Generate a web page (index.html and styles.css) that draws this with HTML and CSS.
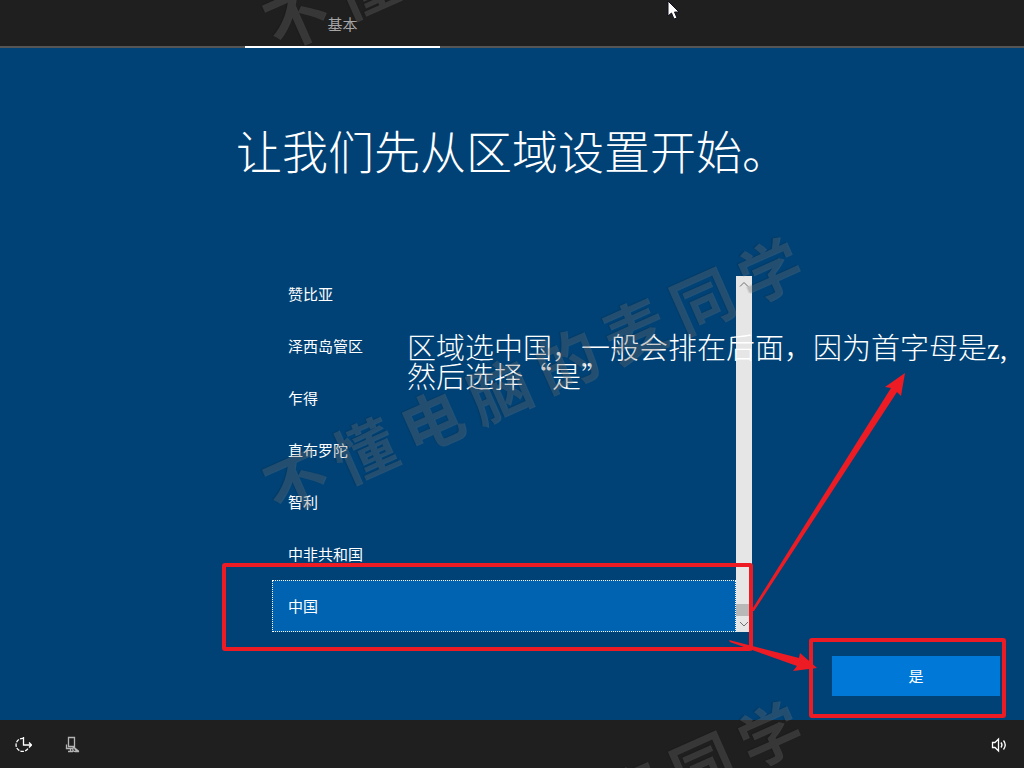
FILE: index.html
```html
<!DOCTYPE html>
<html lang="zh-CN">
<head>
<meta charset="utf-8">
<meta name="viewport" content="width=device-width, initial-scale=1">
<title>区域设置</title>
<link rel="stylesheet" href="styles.css">
</head>
<body>
<header class="topbar">
  <nav class="tabs"><a class="tab" href="#basic" aria-current="step">基本</a></nav>
</header>

<main class="stage" id="basic">
  <h1 class="title">让我们先从区域设置开始。</h1>
  <div class="picker">
    <div class="options" role="listbox" aria-label="区域">
      <button class="option" role="option" type="button">赞比亚</button>
      <button class="option" role="option" type="button">泽西岛管区</button>
      <button class="option" role="option" type="button">乍得</button>
      <button class="option" role="option" type="button">直布罗陀</button>
      <button class="option" role="option" type="button">智利</button>
      <button class="option" role="option" type="button">中非共和国</button>
      <button class="option selected" role="option" type="button" aria-selected="true">中国</button>
    </div>
    <div class="scrollbar" aria-hidden="true">
      <svg class="arrow" viewBox="0 0 16 16"><path d="M4 10.500l4-4 4 4"/></svg>
      <span class="thumb"></span>
      <svg class="arrow" viewBox="0 0 16 16"><path d="M4 6l4 4 4-4"/></svg>
    </div>
  </div>
  <button class="confirm" type="button">是</button>
</main>

<footer class="taskbar">
  <div class="tools">
    <button class="tool" type="button" aria-label="轻松使用">
      <svg viewBox="0 0 18 18"><path d="M9.500 2v8h8M15 7.500l2.500 2.500-2.500 2.500"/><path d="M9.500 3.500A6.500 6.500 0 1 0 14.500 12.500" stroke-dasharray="3.500 1.200"/></svg>
    </button>
    <button class="tool muted" type="button" aria-label="麦克风">
      <svg viewBox="0 0 18 18"><path d="M4.500 2.500h6v9h-6zM2.500 9.500v4h6M6.500 13.500v3M4 16.500h5M9.500 12l5.500 4.500M10.500 12c0 2.500 2 4 4.500 4.500H11c-2 0-3-2-1.500-4.500"/></svg>
    </button>
  </div>
  <button class="tool" type="button" aria-label="音量">
    <svg viewBox="0 0 18 18"><path d="M2.500 7.500h2.500l3.500-3.500v12l-3.500-3.500H2.500zM11 7.500q2 2.500 0 5M13.500 5.500q3.500 4.500 0 9"/></svg>
  </button>
</footer>

<p class="note">区域选中国，一般会排在后面，因为首字母是<span class="latin">z,</span><br>然后选择“是”</p>

<svg class="marks" width="1024" height="768" viewBox="0 0 1024 768" aria-hidden="true">
  <rect x="224" y="565" width="527" height="84" rx="1"/>
  <rect x="811" y="640" width="193" height="76" rx="1"/>
  <path d="M751 611L891 388 885 387 905 373 901 396 897 392 754 611z"/>
  <path d="M729 640L799 658 800 653 817 668 793 671 797 666 730 642z"/>
</svg>

<div class="watermarks" aria-hidden="true">
  <div class="watermark first"><span>不</span><span>懂</span><span>电</span><span>脑</span><span>的</span><span>麦</span><span>同</span><span>学</span></div>
  <div class="watermark second"><span>不</span><span>懂</span><span>电</span><span>脑</span><span>的</span><span>麦</span><span>同</span><span>学</span></div>
  <div class="watermark third"><span>不</span><span>懂</span><span>电</span><span>脑</span><span>的</span><span>麦</span><span>同</span><span>学</span></div>
</div>

<svg class="cursor" width="14" height="20" viewBox="0 0 14 20" aria-hidden="true"><path d="M1 1v15l3.500-3 2.500 6 3-1-2.500-6H12z"/></svg>
</body>
</html>
```

FILE: styles.css
```css
* { box-sizing: border-box; }

body {
  margin: 0;
  min-height: 100vh;
  display: flex;
  flex-direction: column;
  position: relative;
  overflow: hidden;
  background: #004275;
  color: #fff;
  font-family: "Noto Sans CJK SC", sans-serif;
  font-size: 15px;
}

button {
  border: 0;
  padding: 0;
  background: none;
  color: inherit;
  font: inherit;
}

.topbar {
  height: 48px;
  background: #1f1f1f;
  box-shadow: inset 0 -2px #555;
}

.tabs { display: flex; padding-left: 245px; }

.tab {
  width: 195px;
  height: 48px;
  border-bottom: 2px solid #fff;
  color: #a6a6a6;
  line-height: 48px;
  text-align: center;
  text-decoration: none;
}

.stage {
  flex: 1;
  display: flex;
  flex-direction: column;
  align-items: center;
  padding: 69px 24px 24px;
}

.title {
  margin: 0 0 95px;
  font-size: 46px;
  font-weight: 300;
  line-height: 64px;
}

.picker {
  display: flex;
  width: 100%;
  max-width: 480px;
  height: 356px;
}

.options {
  flex: 1;
  display: flex;
  flex-direction: column;
  justify-content: flex-end;
  overflow: hidden;
}

.option {
  flex: none;
  height: 52px;
  padding: 0 16px 2px;
  text-align: left;
}

.selected {
  background: #0063b1;
  border: 1px dotted #fff;
  padding: 0 15px 2px;
}

.scrollbar {
  display: flex;
  flex-direction: column;
  width: 16px;
  background: #e6e6e6;
}

.arrow {
  height: 16px;
  fill: none;
  stroke: #707070;
}

.thumb {
  height: 12px;
  margin-top: auto;
  background: #b8b8b8;
}

.confirm {
  align-self: flex-end;
  width: 168px;
  height: 40px;
  margin-top: 24px;
  padding-bottom: 2px;
  background: #0078d7;
}

.taskbar {
  display: flex;
  align-items: center;
  justify-content: space-between;
  height: 48px;
  padding: 0 16px 0 14px;
  background: #1f1f1f;
}

.tools { display: flex; gap: 32px; }

.tool {
  width: 18px;
  height: 18px;
  color: #fff;
}

.tool svg {
  display: block;
  fill: none;
  stroke: currentColor;
  stroke-width: 1.3;
}

.muted { color: #b4b4b4; }

.note {
  position: absolute;
  left: 407px;
  top: 332px;
  margin: 0;
  font-size: 29px;
  font-weight: 300;
  line-height: 29px;
  white-space: nowrap;
}

.latin {
  font-family: "Liberation Serif", serif;
  line-height: 1px;
}

.marks {
  position: absolute;
  left: 0;
  top: 0;
  pointer-events: none;
}

.marks rect { fill: none; stroke: #ed1c24; stroke-width: 4; }
.marks path { fill: #ed1c24; }

.watermarks {
  position: absolute;
  inset: 0;
  overflow: hidden;
  pointer-events: none;
}

.watermark {
  position: absolute;
  left: 242px;
  display: flex;
  gap: 12px;
  color: rgba(136, 136, 136, 0.26);
  font-size: 62px;
  font-weight: 700;
  line-height: 62px;
  text-shadow: -1px -1px 1px rgba(0, 0, 0, 0.1);
  transform: rotate(-24deg);
}

.first { top: -122px; }
.second { top: 342px; }
.third { top: 806px; }

.cursor {
  position: absolute;
  left: 667px;
  top: 0;
  fill: #fff;
  stroke: #101020;
}
```
